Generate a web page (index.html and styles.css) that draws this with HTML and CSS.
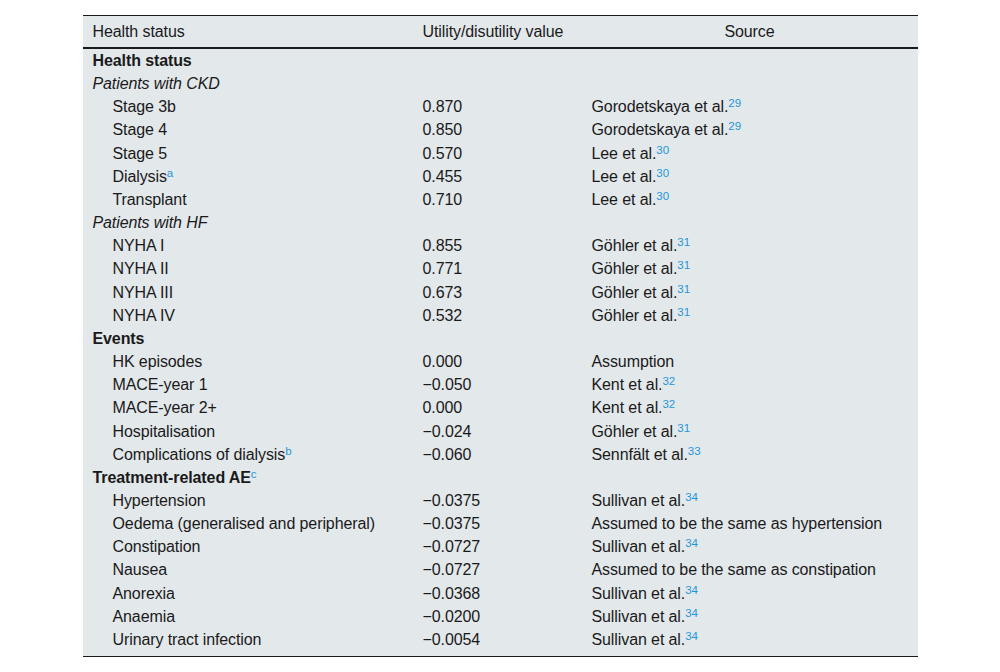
FILE: index.html
```html
<!DOCTYPE html>
<html>
<head>
<meta charset="utf-8">
<link rel="stylesheet" href="styles.css">
</head>
<body>
<table class="tbl">
  <colgroup>
    <col class="c1"><col class="c2"><col class="c3">
  </colgroup>
  <thead>
    <tr><th>Health status</th><th>Utility/disutility value</th><th class="center">Source</th></tr>
  </thead>
  <tbody>
    <tr><td class="b">Health status</td><td></td><td></td></tr>
    <tr><td class="i">Patients with CKD</td><td></td><td></td></tr>
    <tr><td class="ind">Stage 3b</td><td>0.870</td><td>Gorodetskaya et al.<sup>29</sup></td></tr>
    <tr><td class="ind">Stage 4</td><td>0.850</td><td>Gorodetskaya et al.<sup>29</sup></td></tr>
    <tr><td class="ind">Stage 5</td><td>0.570</td><td>Lee et al.<sup>30</sup></td></tr>
    <tr><td class="ind">Dialysis<sup>a</sup></td><td>0.455</td><td>Lee et al.<sup>30</sup></td></tr>
    <tr><td class="ind">Transplant</td><td>0.710</td><td>Lee et al.<sup>30</sup></td></tr>
    <tr><td class="i">Patients with HF</td><td></td><td></td></tr>
    <tr><td class="ind">NYHA I</td><td>0.855</td><td>Göhler et al.<sup>31</sup></td></tr>
    <tr><td class="ind">NYHA II</td><td>0.771</td><td>Göhler et al.<sup>31</sup></td></tr>
    <tr><td class="ind">NYHA III</td><td>0.673</td><td>Göhler et al.<sup>31</sup></td></tr>
    <tr><td class="ind">NYHA IV</td><td>0.532</td><td>Göhler et al.<sup>31</sup></td></tr>
    <tr><td class="b">Events</td><td></td><td></td></tr>
    <tr><td class="ind">HK episodes</td><td>0.000</td><td>Assumption</td></tr>
    <tr><td class="ind">MACE-year 1</td><td>−0.050</td><td>Kent et al.<sup>32</sup></td></tr>
    <tr><td class="ind">MACE-year 2+</td><td>0.000</td><td>Kent et al.<sup>32</sup></td></tr>
    <tr><td class="ind">Hospitalisation</td><td>−0.024</td><td>Göhler et al.<sup>31</sup></td></tr>
    <tr><td class="ind">Complications of dialysis<sup>b</sup></td><td>−0.060</td><td>Sennfält et al.<sup>33</sup></td></tr>
    <tr><td class="b">Treatment-related AE<sup>c</sup></td><td></td><td></td></tr>
    <tr><td class="ind">Hypertension</td><td>−0.0375</td><td>Sullivan et al.<sup>34</sup></td></tr>
    <tr><td class="ind">Oedema (generalised and peripheral)</td><td>−0.0375</td><td>Assumed to be the same as hypertension</td></tr>
    <tr><td class="ind">Constipation</td><td>−0.0727</td><td>Sullivan et al.<sup>34</sup></td></tr>
    <tr><td class="ind">Nausea</td><td>−0.0727</td><td>Assumed to be the same as constipation</td></tr>
    <tr><td class="ind">Anorexia</td><td>−0.0368</td><td>Sullivan et al.<sup>34</sup></td></tr>
    <tr><td class="ind">Anaemia</td><td>−0.0200</td><td>Sullivan et al.<sup>34</sup></td></tr>
    <tr class="last"><td class="ind">Urinary tract infection</td><td>−0.0054</td><td>Sullivan et al.<sup>34</sup></td></tr>
  </tbody>
</table>
</body>
</html>
```
FILE: styles.css
```css
html, body {
  margin: 0;
  padding: 0;
  background: #ffffff;
}
body {
  padding-top: 15px;
  font-family: "Liberation Sans", Arial, sans-serif;
  font-size: 16px;
  letter-spacing: -0.1px;
  color: #1a1a1a;
}
.tbl {
  width: 835px;
  margin: 0 auto;
  border-collapse: collapse;
  background: #e3e8eb;
  table-layout: fixed;
  border-top: 1px solid #1a1a1a;
  border-bottom: 1px solid #1a1a1a;
}
.c1 { width: 330px; }
.c2 { width: 169px; }
.c3 { width: 336px; }
th {
  font-weight: normal;
  text-align: left;
  padding: 6px 10px 6px 10px;
  line-height: 19px;
  border-bottom: 2px solid #1a1a1a;
}
th.center { text-align: center; }
td {
  padding: 2px 10px;
  line-height: 19.16px;
  text-align: left;
  vertical-align: top;
  white-space: nowrap;
}
td.b { font-weight: bold; }
td.i { font-style: italic; }
td.ind { padding-left: 30px; }
tr.last td { padding-bottom: 6.5px; }
sup {
  font-size: 11.5px;
  line-height: 0;
  vertical-align: 5px;
  color: #2596d9;
  font-weight: normal;
  letter-spacing: 0;
}
```
